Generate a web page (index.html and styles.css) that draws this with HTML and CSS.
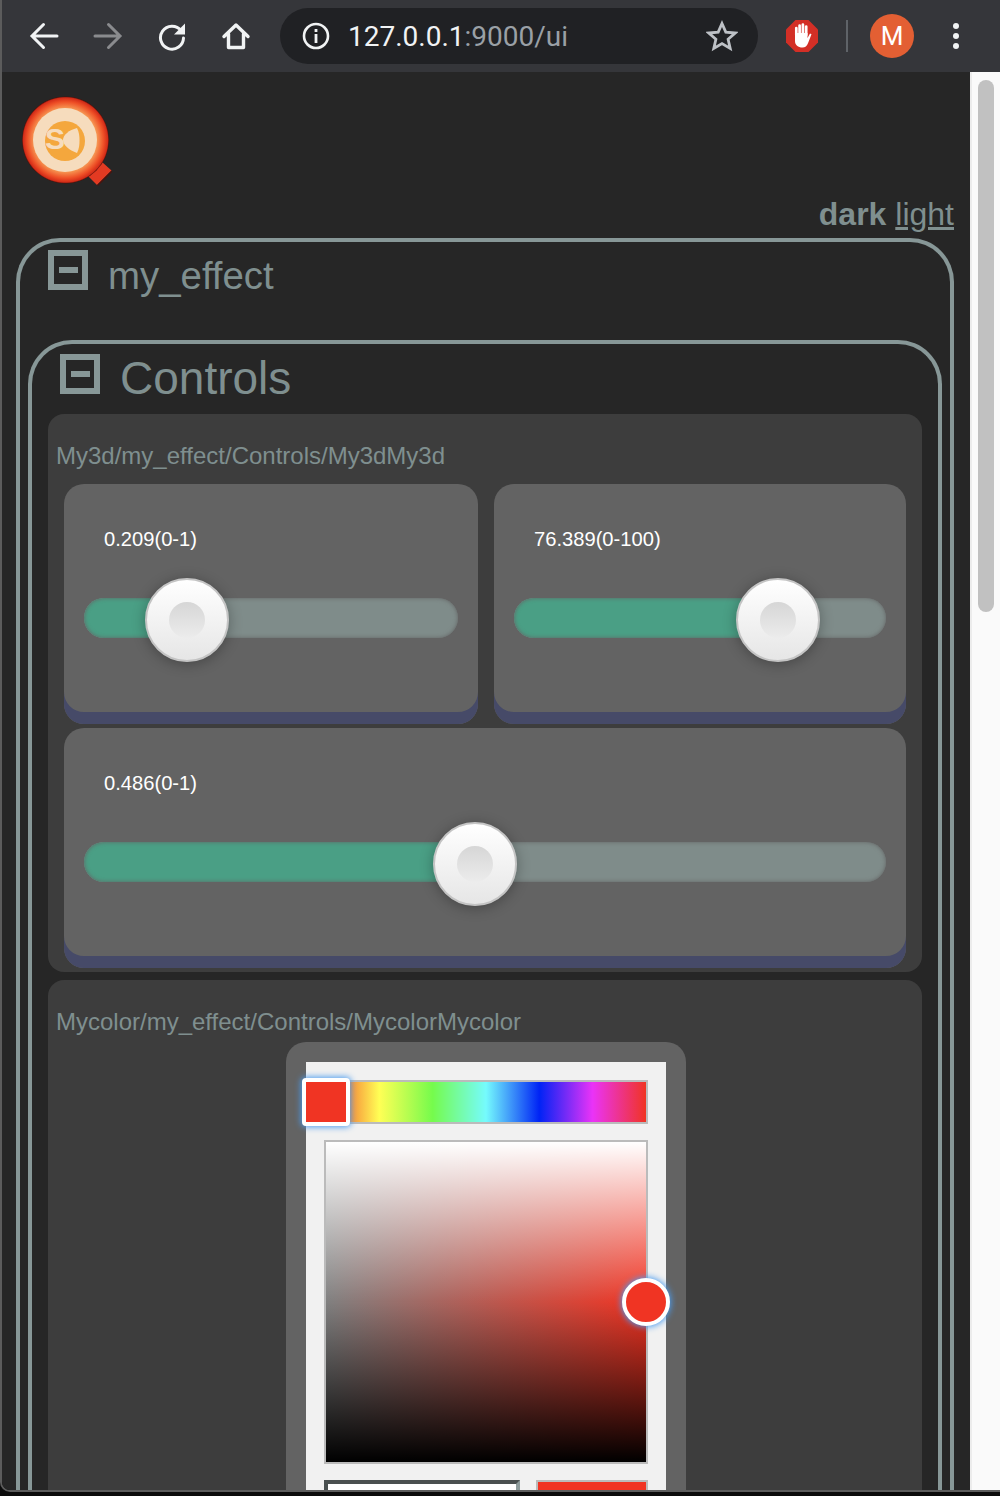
FILE: index.html
```html
<!DOCTYPE html>
<html lang="en">
<head>
  <meta charset="UTF-8">
  <title>my_effect</title>
  <link rel="stylesheet" href="styles.css">
</head>
<body>
  <div class="window">
    <!-- Browser toolbar -->
    <div class="toolbar">
      <svg class="tool-icon" viewBox="0 0 32 32"><path d="M29 16H5M15.500 4.500 4 16l11.500 11.500" class="stroke"/></svg>
      <svg class="tool-icon tool-off" viewBox="0 0 32 32"><path d="M3 16h24M16.500 4.500 28 16 16.500 27.500" class="stroke"/></svg>
      <svg class="tool-icon" viewBox="0 0 32 32"><path d="M25 10.500A11.500 11.500 0 1 0 27.500 18" class="stroke"/><path d="M29 3.500V14.500H18z" class="fill"/></svg>
      <svg class="tool-icon" viewBox="0 0 32 32"><path d="M4 16.500 16 5l12 11.500M8.500 14v13.500h15V14" class="stroke stroke-join"/></svg>
      <div class="omnibox">
        <svg class="info-icon" viewBox="0 0 28 28"><circle cx="14" cy="14" r="12" class="stroke thin"/><rect x="12.600" y="12" width="2.800" height="9" class="fill"/><rect x="12.600" y="7" width="2.800" height="3" class="fill"/></svg>
        <div class="url">127.0.0.1<span class="url-dim">:9000/ui</span></div>
        <svg class="star-icon" viewBox="0 0 32 32"><path d="M16 3.500l3.800 8.600 9.400.9-7.100 6.200 2.100 9.200L16 23.600l-8.200 4.800 2.100-9.200-7.100-6.200 9.400-.9z" class="stroke star-line"/></svg>
      </div>
      <svg class="block-icon" viewBox="0 0 32 32">
        <path d="M9.500 0h13L32 9.500v13L22.500 32h-13L0 22.500v-13z" fill="#d32f26"/>
        <path d="M10.300 15V8M13.600 14V5.500M16.900 14V4.500M20.200 15V6.500" class="hand"/>
        <path d="M9 13h12.500v5l2.500-4.500 1.500.8-3.500 9c-1 2.800-2.800 4.200-5.500 4.200-4.500 0-7.500-2.500-7.500-6.500z" fill="#fff"/>
      </svg>
      <div class="tool-sep"></div>
      <div class="avatar">M</div>
      <div class="menu-dots"><i></i><i></i><i></i></div>
    </div>

    <div class="viewport">
      <div class="page">
        <svg class="logo" viewBox="0 0 90 90">
          <defs>
            <radialGradient id="logo-glow">
              <stop offset="0.72" stop-color="#f79a55"/>
              <stop offset="0.88" stop-color="#ee4f26"/>
              <stop offset="0.97" stop-color="#d32c18"/>
              <stop offset="1" stop-color="#4a0f09"/>
            </radialGradient>
          </defs>
          <path d="M65 79 80 66l9.500 8.500L75 89z" fill="#e33a22"/>
          <path d="M75 89l14.500-14.500.5 1.500L76 90z" fill="#4a130d"/>
          <circle cx="43.500" cy="44" r="43.500" fill="url(#logo-glow)"/>
          <circle cx="43" cy="44" r="32" fill="#f6dcbd"/>
          <circle cx="43" cy="45" r="20" fill="#f4a73d"/>
          <text x="23" y="53" class="logo-s">S</text>
          <path d="M55 32c2 4 2.500 8 2.500 12.500s-.5 8.500-2.500 12.500c-8-3-14-8-14-13s6-10 14-12z" fill="#f6dcbd"/>
        </svg>

        <div class="theme-switch"><span class="theme-on">dark</span> <span class="theme-off">light</span></div>

        <div class="panel panel-outer">
          <div class="panel-head">
            <div class="collapse"><span></span></div>
            <div class="panel-title">my_effect</div>
          </div>

          <div class="panel panel-inner">
            <div class="panel-head">
              <div class="collapse"><span></span></div>
              <div class="panel-title big">Controls</div>
            </div>

            <div class="group">
              <div class="group-title">My3d/my_effect/Controls/My3dMy3d</div>
              <div class="slider-grid">
                <div class="slider-card">
                  <div class="slider-label">0.209(0-1)</div>
                  <div class="track" style="--v:0.209">
                    <div class="track-fill"></div>
                    <div class="knob"><span></span></div>
                  </div>
                </div>
                <div class="slider-card">
                  <div class="slider-label">76.389(0-100)</div>
                  <div class="track" style="--v:0.771">
                    <div class="track-fill"></div>
                    <div class="knob"><span></span></div>
                  </div>
                </div>
                <div class="slider-card wide">
                  <div class="slider-label">0.486(0-1)</div>
                  <div class="track" style="--v:0.486">
                    <div class="track-fill"></div>
                    <div class="knob"><span></span></div>
                  </div>
                </div>
              </div>
            </div>

            <div class="group">
              <div class="group-title color-title">Mycolor/my_effect/Controls/MycolorMycolor</div>
              <div class="color-card">
                <div class="picker">
                  <div class="hue-bar">
                    <div class="swatch"></div>
                  </div>
                  <div class="sat-box">
                    <div class="sat-thumb"></div>
                  </div>
                  <div class="picker-inputs">
                    <div class="hex-input"></div>
                    <div class="color-preview"></div>
                  </div>
                </div>
              </div>
            </div>
          </div>
        </div>
      </div>
      <div class="scrollbar"><div class="scroll-thumb"></div></div>
    </div>
  </div>
</body>
</html>
```

FILE: styles.css
```css
html, body {
  height: 100%;
}
body {
  margin: 0;
  height: 1496px;
  overflow: hidden;
  background-color: #0b0b0b;
  font-family: "Liberation Sans", Arial, sans-serif;
}
.window {
  box-sizing: border-box;
  height: 1492px;
  border-left: 2px solid #5c5c5c;
  border-bottom: 2px solid #5c5c5c;
  border-bottom-left-radius: 10px;
  overflow: hidden;
}

/* Browser toolbar */
.toolbar {
  height: 72px;
  background-color: #35363a;
  display: flex;
  align-items: center;
  padding-left: 26px;
}
.tool-icon {
  width: 32px;
  height: 32px;
  margin-right: 32px;
  flex-shrink: 0;
}
.tool-off {
  opacity: 0.45;
}
.stroke {
  fill: none;
  stroke: #f1f3f4;
  stroke-width: 3;
  stroke-linecap: round;
}
.stroke-join {
  stroke-width: 3.400;
  stroke-linejoin: round;
}
.thin {
  stroke-width: 2.600;
}
.star-line {
  stroke: #bdc1c6;
  stroke-width: 2.800;
}
.fill {
  fill: #f1f3f4;
}
.omnibox {
  width: 478px;
  height: 56px;
  margin-left: -4px;
  background-color: #202124;
  border-radius: 28px;
  display: flex;
  align-items: center;
  padding: 0 20px 0 22px;
  box-sizing: border-box;
}
.info-icon {
  width: 28px;
  height: 28px;
  margin-right: 18px;
}
.url {
  flex: 1;
  color: #f1f3f4;
  font-family: Roboto, sans-serif;
  font-size: 28px;
}
.url-dim {
  color: #9aa0a6;
}
.star-icon {
  width: 32px;
  height: 32px;
}
.block-icon {
  width: 32px;
  height: 32px;
  margin-left: 28px;
}
.hand {
  fill: none;
  stroke: #fff;
  stroke-width: 2.700;
  stroke-linecap: round;
}
.tool-sep {
  width: 2px;
  height: 32px;
  background-color: #5f6368;
  margin-left: 28px;
}
.avatar {
  width: 44px;
  height: 44px;
  border-radius: 50%;
  background-color: #e35f33;
  color: #fff;
  font-family: Roboto, sans-serif;
  font-size: 26px;
  line-height: 44px;
  text-align: center;
  margin-left: 22px;
}
.menu-dots {
  display: flex;
  flex-direction: column;
  gap: 4px;
  margin-left: 39px;
}
.menu-dots i {
  display: block;
  width: 6px;
  height: 6px;
  border-radius: 50%;
  background-color: #f1f3f4;
}

/* Page */
.viewport {
  display: flex;
  height: 1420px;
}
.page {
  flex: 1;
  min-width: 0;
  overflow: hidden;
  background-color: #262626;
  padding: 24px 16px 0 14px;
  color: #7f8f8f;
}
.scrollbar {
  box-sizing: border-box;
  width: 30px;
  padding: 8px 6px 0 6px;
  border-left: 2px solid #ececec;
  background-color: #fafafa;
}
.scroll-thumb {
  width: 16px;
  height: 532px;
  border-radius: 8px;
  background-color: #c1c1c1;
}
.logo {
  display: block;
  width: 90px;
  height: 90px;
  margin-left: 6px;
}
.logo-s {
  font-family: "Liberation Sans", sans-serif;
  font-weight: bold;
  font-size: 30px;
  fill: #f6dcbd;
}
.theme-switch {
  text-align: right;
  font-size: 32px;
  line-height: 36px;
  height: 42px;
  margin-top: 10px;
}
.theme-on {
  font-weight: bold;
}
.theme-off {
  text-decoration: underline;
}

/* Collapsible panels */
.panel {
  border: 4px solid #879797;
  border-bottom: 0;
  border-radius: 44px 44px 0 0;
}
.panel-outer {
  padding: 8px 8px 0 8px;
}
.panel-inner {
  padding: 10px 16px 0 16px;
}
.panel-head {
  display: flex;
  gap: 20px;
  padding-left: 20px;
  height: 90px;
}
.panel-inner > .panel-head {
  height: 60px;
  padding-left: 12px;
}
.collapse {
  box-sizing: border-box;
  width: 40px;
  height: 40px;
  border: 6px solid #879797;
  display: flex;
  align-items: center;
  justify-content: center;
  flex-shrink: 0;
}
.collapse span {
  width: 19px;
  height: 6px;
  background-color: #879797;
}
.panel-title {
  font-size: 38.400px;
  line-height: 52px;
}
.panel-title.big {
  font-size: 46px;
  line-height: 48px;
}

/* Groups and sliders */
.group {
  background-color: #3d3d3d;
  border-radius: 16px;
  padding: 0 16px 4px 16px;
  margin-bottom: 8px;
}
.group-title {
  font-size: 24px;
  line-height: 28px;
  padding-top: 28px;
  height: 42px;
  margin-left: -8px;
}
.color-title {
  height: 34px;
}
.slider-grid {
  display: grid;
  grid-template-columns: 414px 1fr;
  gap: 4px 16px;
}
.slider-card {
  box-sizing: border-box;
  height: 240px;
  padding: 40px 20px 0 20px;
  border-radius: 20px;
  background-color: #636363;
  box-shadow: inset 0 -12px 0 #464a68;
}
.slider-card.wide {
  grid-column: 1 / 3;
}
.slider-label {
  color: #fff;
  font-size: 20.160px;
  line-height: 30px;
  height: 74px;
  padding-left: 20px;
}
.track {
  position: relative;
  height: 40px;
  border-radius: 20px;
  background-color: #7f8c8a;
}
.track-fill {
  height: 100%;
  width: calc((100% - 84px) * var(--v) + 42px);
  border-radius: 20px 0 0 20px;
  background-color: #4a9f85;
}
/* soft edge round the whole track */
.track::after {
  content: "";
  position: absolute;
  inset: 0;
  border-radius: 20px;
  box-shadow: inset 0 0 4px #636363;
}
.knob {
  position: absolute;
  z-index: 1;
  top: -20px;
  left: calc((100% - 84px) * var(--v));
  box-sizing: border-box;
  width: 84px;
  height: 84px;
  border: 2px solid #c4c4c4;
  border-radius: 50%;
  background: linear-gradient(#ffffff, #e6e6e6);
  box-shadow: 0 2px 14px rgba(0, 0, 0, 0.3);
  display: flex;
  align-items: center;
  justify-content: center;
}
.knob span {
  width: 36px;
  height: 36px;
  border-radius: 50%;
  background: linear-gradient(#d6d6d6, #ececec);
}

/* Color picker */
.color-card {
  width: 400px;
  margin-left: 222px;
  box-sizing: border-box;
  padding: 20px 20px 0 20px;
  border-radius: 20px 20px 0 0;
  background-color: #636363;
}
.picker {
  background-color: #f1f1f1;
  padding: 18px 18px 0 18px;
  height: 480px;
}
.hue-bar {
  position: relative;
  box-sizing: border-box;
  height: 44px;
  border: 2px solid #bbb;
  background: linear-gradient(to right, #f03423, #ffff55 16.67%, #75fb4c 33.33%, #75fbfd 50%, #0023f5 66.67%, #ea33f7 83.33%, #f03423);
}
.swatch {
  position: absolute;
  top: -4px;
  left: -24px;
  box-sizing: border-box;
  width: 48px;
  height: 48px;
  border: 4px solid #fff;
  border-radius: 4px;
  background-color: #f03423;
  box-shadow: 0 0 6px 1px #4a9cf0;
}
.sat-box {
  position: relative;
  box-sizing: border-box;
  height: 324px;
  margin-top: 16px;
  border: 2px solid #bbb;
  background: linear-gradient(to bottom, #fff, rgba(255, 255, 255, 0) 50%, rgba(0, 0, 0, 0) 50%, #000), linear-gradient(to right, #808080, #f03423);
}
.sat-thumb {
  position: absolute;
  top: 136px;
  right: -24px;
  box-sizing: border-box;
  width: 48px;
  height: 48px;
  border: 4px solid #fff;
  border-radius: 50%;
  background-color: #f03423;
  box-shadow: 0 0 6px 1px #4a9cf0;
}
.picker-inputs {
  display: flex;
  gap: 16px;
  margin-top: 16px;
}
.hex-input {
  box-sizing: border-box;
  width: 196px;
  height: 60px;
  border: 4px solid;
  border-color: #4a5050 #8e9c9c #8e9c9c #4a5050;
  background-color: #fff;
}
.color-preview {
  flex: 1;
  height: 60px;
  box-sizing: border-box;
  border: 2px solid #bbb;
  background-color: #f03423;
}
```
